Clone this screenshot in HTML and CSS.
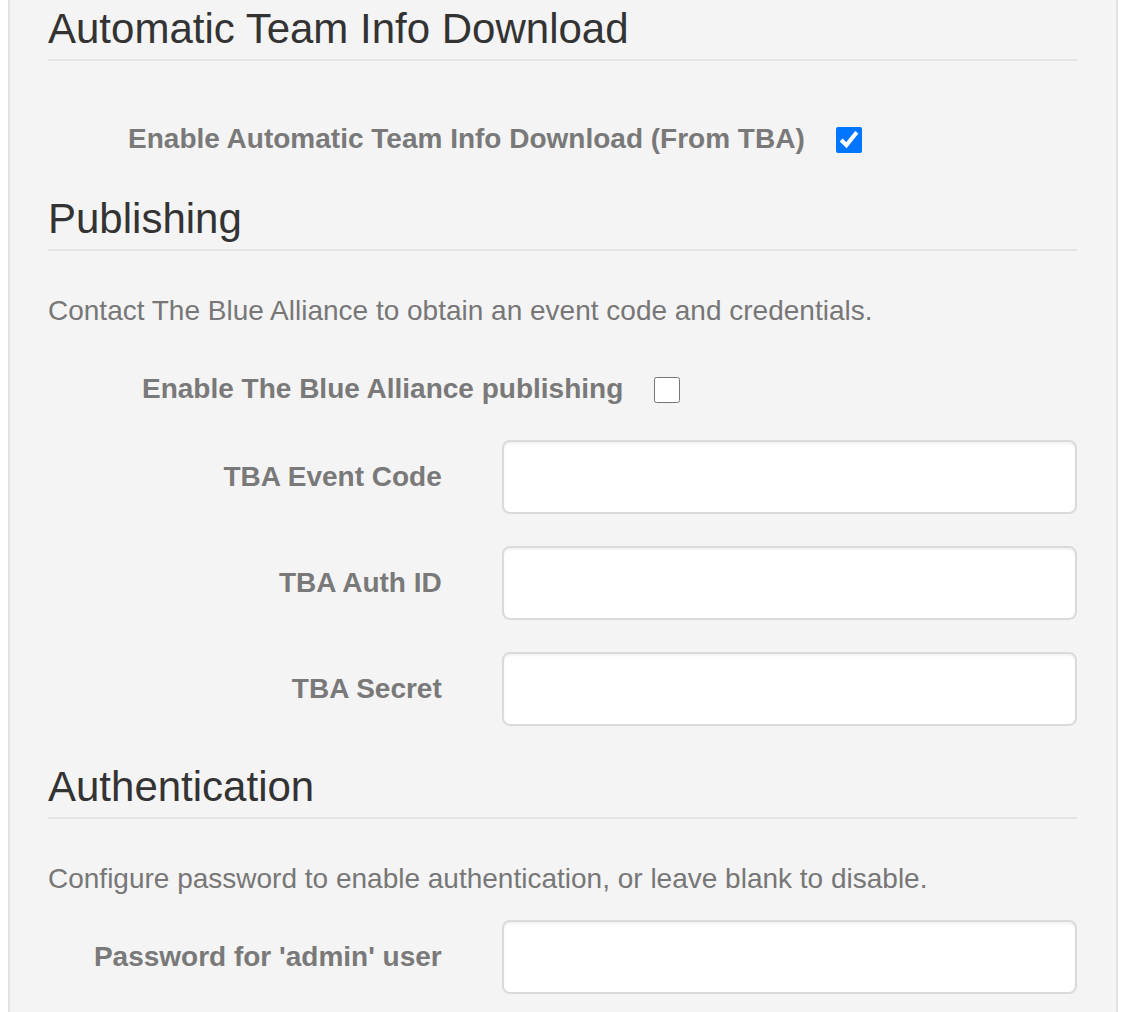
FILE: index.html
```html
<!DOCTYPE html>
<html lang="en">
<head>
<meta charset="utf-8">
<title>Settings</title>
<link rel="stylesheet" href="styles.css">
</head>
<body>
<div class="well">
  <form class="form">
    <fieldset class="section">
      <legend class="legend">Automatic Team Info Download</legend>
      <div class="row check-row check-row-first">
        <label class="label col-9" for="tbaDownload">Enable Automatic Team Info Download (From TBA)</label>
        <div class="check-col col-3">
          <input class="check" type="checkbox" id="tbaDownload" checked>
        </div>
      </div>
    </fieldset>
    <fieldset class="section">
      <legend class="legend">Publishing</legend>
      <p class="help">Contact The Blue Alliance to obtain an event code and credentials.</p>
      <div class="row check-row">
        <label class="label col-7" for="tbaPublish">Enable The Blue Alliance publishing</label>
        <div class="check-col col-5">
          <input class="check" type="checkbox" id="tbaPublish">
        </div>
      </div>
      <div class="row input-row">
        <label class="label col-5" for="tbaCode">TBA Event Code</label>
        <div class="input-col col-7"><input class="text-input" type="text" id="tbaCode"></div>
      </div>
      <div class="row input-row">
        <label class="label col-5" for="tbaId">TBA Auth ID</label>
        <div class="input-col col-7"><input class="text-input" type="text" id="tbaId"></div>
      </div>
      <div class="row input-row input-row-last">
        <label class="label col-5" for="tbaSecret">TBA Secret</label>
        <div class="input-col col-7"><input class="text-input" type="text" id="tbaSecret"></div>
      </div>
    </fieldset>
    <fieldset class="section">
      <legend class="legend">Authentication</legend>
      <p class="help">Configure password to enable authentication, or leave blank to disable.</p>
      <div class="row input-row">
        <label class="label col-5" for="adminPw">Password for 'admin' user</label>
        <div class="input-col col-7"><input class="text-input" type="password" id="adminPw"></div>
      </div>
    </fieldset>
  </form>
</div>
</body>
</html>
```
FILE: styles.css
```css
html, body {
  margin: 0;
  padding: 0;
  background: #ffffff;
  overflow: hidden;
}

body {
  padding-left: 8px;
  font-family: "Liberation Sans", Arial, sans-serif;
  font-size: 28px;
  line-height: 40px;
  color: #333333;
}

.well {
  box-sizing: border-box;
  width: 1110px;
  margin-top: -1px;
  padding: 0 39px 40px 38px;
  background: #f4f4f4;
  border-left: 2px solid #e3e3e3;
  border-right: 2px solid #e3e3e3;
}

.form {
  margin: 0;
}

.section {
  margin: 0;
  padding: 0;
  border: 0;
  min-width: 0;
}

.legend {
  display: block;
  width: 100%;
  box-sizing: border-box;
  padding: 0;
  margin: 0 0 40px;
  font-size: 42px;
  line-height: 60px;
  color: #333333;
  border-bottom: 2px solid #e5e5e5;
}

.help {
  margin: 0 0 21px;
  color: #777777;
}

.row {
  display: grid;
  grid-template-columns: repeat(12, 1fr);
  margin: 0 -30px;
}

.col-3 { grid-column: span 3; }
.col-5 { grid-column: span 5; }
.col-7 { grid-column: span 7; }
.col-9 { grid-column: span 9; }

.label {
  padding: 0 30px;
  text-align: right;
  font-weight: bold;
  color: #797979;
  white-space: nowrap;
}

.check-row {
  padding-top: 17px;
  margin-bottom: 31px;
}

.check-row-first {
  padding-top: 18px;
  margin-bottom: 30px;
}

.check-col {
  padding-left: 1px;
}

.check {
  display: block;
  width: 26px;
  height: 26px;
  margin: 8px 0 0;
}

.input-row {
  align-items: center;
  margin-bottom: 32px;
}

.input-row-last {
  margin-bottom: 31px;
}

.input-col {
  padding: 0 30px;
}

.text-input {
  display: block;
  box-sizing: border-box;
  width: 100%;
  height: 74px;
  margin: 0;
  padding: 12px 24px;
  font-family: inherit;
  font-size: 28px;
  color: #555555;
  background: #ffffff;
  border: 2px solid #dadada;
  border-radius: 8px;
  box-shadow: inset 0 2px 2px rgba(0, 0, 0, 0.05);
  outline: none;
}
```
